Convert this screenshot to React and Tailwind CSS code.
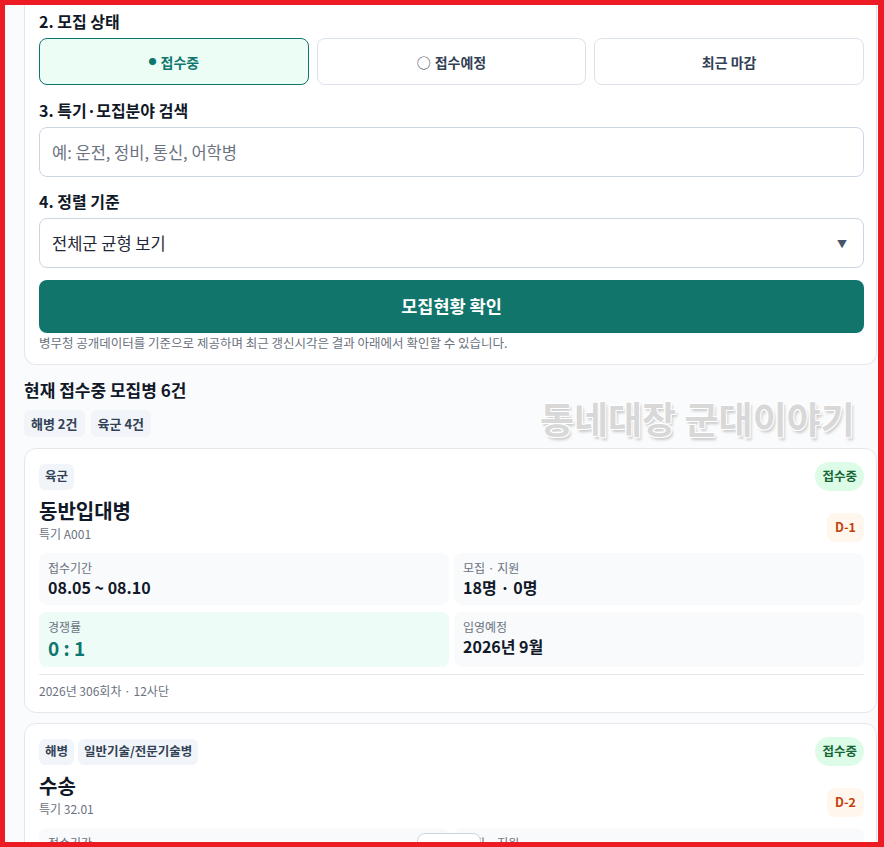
import React from "react";

function Chip({ children }) {
  return (
    <span className="inline-flex items-center h-[26px] px-1.5 rounded-md bg-[#f1f5f9] text-[#334155] text-[12.5px] font-bold">
      {children}
    </span>
  );
}

function Cell({ label, value, mint }) {
  return (
    <div className={`rounded-lg px-[9px] py-[7px] ${mint ? "bg-[#edfcf7]" : "bg-[#f8fafc]"}`}>
      <div className="text-xs leading-4 text-[#6b7280]">{label}</div>
      {mint ? (
        <div className="text-[19px] leading-[25px] font-bold text-[#0f766e]">{value}</div>
      ) : (
        <div className="text-base leading-[22px] font-bold text-[#111827]">{value}</div>
      )}
    </div>
  );
}

function Card({ chips, title, code, dday, period, counts, ratio, entry, footer, className = "" }) {
  return (
    <div className={`bg-white border border-[#e5e7eb] rounded-xl pl-3.5 pr-3 pt-[13px] pb-[13px] ${className}`}>
      <div className="flex items-center justify-between">
        <div className="flex gap-1">
          {chips.map((c) => (
            <Chip key={c}>{c}</Chip>
          ))}
        </div>
        <span className="inline-flex items-center h-[29px] px-[7px] rounded-full bg-[#dcfce7] text-[#166534] text-[12.5px] font-bold">
          접수중
        </span>
      </div>
      <div className="flex items-end justify-between mt-1.5">
        <div>
          <div className="text-xl leading-7 font-bold text-[#111827]">{title}</div>
          <div className="text-xs leading-[18px] text-[#6b7280]">{code}</div>
        </div>
        <span className="inline-flex items-center h-[29px] px-2 rounded-lg bg-[#fff7ed] text-[#c2410c] text-[12.5px] font-bold mb-px">
          {dday}
        </span>
      </div>
      <div className="grid grid-cols-2 gap-x-[5px] gap-y-[7px] mt-2.5">
        <Cell label="접수기간" value={period} />
        <Cell label="모집 · 지원" value={counts} />
        <Cell label="경쟁률" value={ratio} mint />
        <Cell label="입영예정" value={entry} />
      </div>
      <div className="mt-[7px] border-t border-[#e5e7eb] pt-2 text-xs leading-4 text-[#6b7280]">{footer}</div>
    </div>
  );
}

export default function App() {
  return (
    <div className="w-[884px] h-[847px] border-t-[5px] border-l-[5px] border-r-[6px] border-b-[5px] border-[#ed1c24] overflow-hidden relative bg-[#fafbfc] font-['Noto_Sans_CJK_KR',sans-serif]">
      <div className="pl-[19px] pr-px">
        <div className="bg-white border border-t-0 border-[#e5e7eb] rounded-b-xl pl-3.5 pr-3 pt-1 pb-[13px]">
          <div className="text-base leading-[25px] font-bold text-[#111827] mb-1">2. 모집 상태</div>
          <div className="grid grid-cols-3 gap-2">
            <button className="h-[47px] rounded-lg border border-[#0f766e] bg-[#ecfdf5] text-[#0f766e] text-sm font-bold flex items-center justify-center">
              <span className="text-[8px] mr-1">●</span>접수중
            </button>
            <button className="h-[47px] rounded-lg border border-[#dbe2ea] bg-white text-[#334155] text-sm font-bold flex items-center justify-center">
              <span className="mr-1 font-normal">○</span>접수예정
            </button>
            <button className="h-[47px] rounded-lg border border-[#dbe2ea] bg-white text-[#334155] text-sm font-bold flex items-center justify-center">
              최근 마감
            </button>
          </div>

          <div className="text-base leading-[25px] font-bold text-[#111827] mb-1 mt-[13px]">3. 특기·모집분야 검색</div>
          <input
            className="w-full h-[50px] rounded-lg border border-[#cbd5e1] px-3 text-[16.5px] text-[#1f2937] placeholder:text-[#6b7280] outline-none bg-white"
            placeholder="예: 운전, 정비, 통신, 어학병"
          />

          <div className="text-base leading-[25px] font-bold text-[#111827] mb-1 mt-3">4. 정렬 기준</div>
          <div className="h-[50px] rounded-lg border border-[#cbd5e1] pl-3 pr-4 flex items-center justify-between text-[16.5px] text-[#1f2937]">
            <span>전체군 균형 보기</span>
            <span className="text-[10px] text-[#475569]">▼</span>
          </div>

          <button className="mt-3 w-full h-[53px] rounded-lg bg-[#12756b] text-white text-[17.5px] font-bold">
            모집현황 확인
          </button>
          <div className="mt-0.5 text-[12.5px] leading-4 text-[#6b7280]">
            병무청 공개데이터를 기준으로 제공하며 최근 갱신시각은 결과 아래에서 확인할 수 있습니다.
          </div>
        </div>

        <div className="mt-[13px] text-[17px] leading-6 font-bold text-[#111827]">현재 접수중 모집병 6건</div>
        <div className="flex gap-1.5 mt-2">
          <span className="inline-flex items-center h-[27px] px-[7px] rounded-md bg-[#f1f5f9] text-[#334155] text-[13px] font-bold">해병 2건</span>
          <span className="inline-flex items-center h-[27px] px-[7px] rounded-md bg-[#f1f5f9] text-[#334155] text-[13px] font-bold">육군 4건</span>
        </div>

        <Card
          className="mt-[11px]"
          chips={["육군"]}
          title="동반입대병"
          code="특기 A001"
          dday="D-1"
          period="08.05 ~ 08.10"
          counts="18명 · 0명"
          ratio="0 : 1"
          entry="2026년 9월"
          footer="2026년 306회차 · 12사단"
        />
        <Card
          className="mt-2.5"
          chips={["해병", "일반기술/전문기술병"]}
          title="수송"
          code="특기 32.01"
          dday="D-2"
          period="08.06 ~ 08.12"
          counts="12명 · 4명"
          ratio="0.3 : 1"
          entry="2026년 10월"
          footer="2026년 1312기"
        />
      </div>

      <div className="absolute left-[535px] top-[395px] text-[37px] leading-none font-bold text-[#d8d8d8] [text-shadow:-1px_-1px_0_#fff,1px_-1px_0_#fff,-1px_1px_0_#fff,1px_1px_0_#fff,2px_3px_3px_rgba(0,0,0,0.2)] pointer-events-none">
        동네대장 군대이야기
      </div>

      <div className="absolute left-[412px] top-[828px] w-[64px] h-[30px] rounded-lg border border-[#cbd5e1] bg-white" />
    </div>
  );
}
